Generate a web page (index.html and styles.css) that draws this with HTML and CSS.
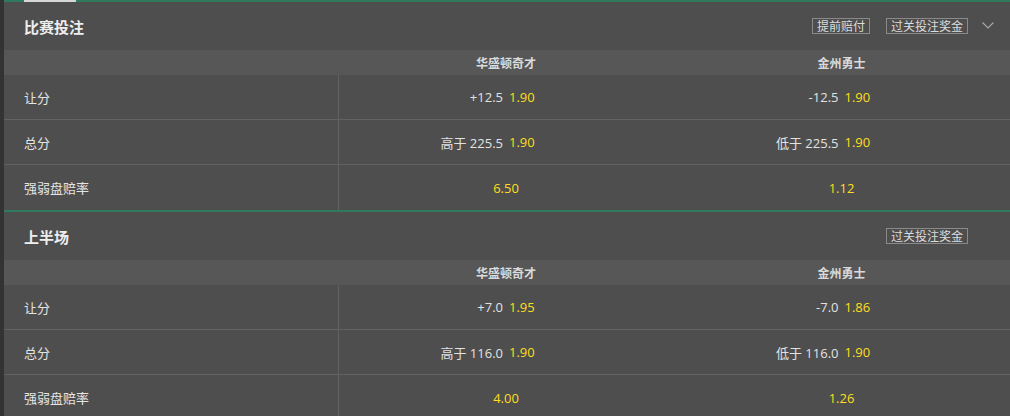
FILE: index.html
```html
<!DOCTYPE html>
<html lang="zh">
<head>
<meta charset="utf-8">
<link rel="stylesheet" href="styles.css">
</head>
<body>
<div class="page">
  <div class="rail"></div>
  <div class="main">
    <section class="market first">
      <div class="tab-mark"></div>
      <div class="m-head">
        <h2 class="m-title">比赛投注</h2>
        <div class="m-tools">
          <span class="tag tag-first">提前赔付</span>
          <span class="tag">过关投注奖金</span>
          <svg class="chev" width="12" height="7" viewBox="0 0 12 7"><path d="M0.5 0.5 L6 6 L11.5 0.5" fill="none" stroke="#a8a8a8" stroke-width="1.1"/></svg>
        </div>
      </div>
      <div class="grid">
        <div class="ch ch-blank"></div>
        <div class="ch">华盛顿奇才</div>
        <div class="ch">金州勇士</div>

        <div class="lbl">让分</div>
        <div class="odd"><span class="hc">+12.5</span><span class="pr">1.90</span></div>
        <div class="odd"><span class="hc">-12.5</span><span class="pr">1.90</span></div>

        <div class="lbl">总分</div>
        <div class="odd"><span class="hc">高于 225.5</span><span class="pr">1.90</span></div>
        <div class="odd"><span class="hc">低于 225.5</span><span class="pr">1.90</span></div>

        <div class="lbl last">强弱盘赔率</div>
        <div class="odd single last"><span class="pr">6.50</span></div>
        <div class="odd single last"><span class="pr">1.12</span></div>
      </div>
    </section>
    <section class="market">
      <div class="m-head">
        <h2 class="m-title">上半场</h2>
        <div class="m-tools">
          <span class="tag">过关投注奖金</span>
          <span class="chev-space"></span>
        </div>
      </div>
      <div class="grid">
        <div class="ch ch-blank"></div>
        <div class="ch">华盛顿奇才</div>
        <div class="ch">金州勇士</div>

        <div class="lbl">让分</div>
        <div class="odd"><span class="hc">+7.0</span><span class="pr">1.95</span></div>
        <div class="odd"><span class="hc">-7.0</span><span class="pr">1.86</span></div>

        <div class="lbl">总分</div>
        <div class="odd"><span class="hc">高于 116.0</span><span class="pr">1.90</span></div>
        <div class="odd"><span class="hc">低于 116.0</span><span class="pr">1.90</span></div>

        <div class="lbl last">强弱盘赔率</div>
        <div class="odd single last"><span class="pr">4.00</span></div>
        <div class="odd single last"><span class="pr">1.26</span></div>
      </div>
    </section>
  </div>
</div>
</body>
</html>
```
FILE: styles.css
```css
* { box-sizing: border-box; }
html, body { margin: 0; padding: 0; }
body {
  background: #4e4e4e;
  font-family: "Open Sans", "Noto Sans CJK SC", sans-serif;
  color: #e2e2e2;
  overflow: hidden;
}
.page { display: flex; height: 416px; }
.rail { width: 4px; background: #333333; flex: none; }
.main { flex: 1; }
.market {
  border-top: 2px solid #2f7a5c;
  position: relative;
}
.tab-mark {
  position: absolute;
  left: 20px;
  top: -2px;
  width: 52px;
  height: 2px;
  background: #d6d6d6;
}
.m-head {
  height: 48px;
  display: flex;
  align-items: center;
  justify-content: space-between;
  padding: 0 16px 0 20px;
}
.m-title {
  margin: 0;
  font-size: 15px;
  font-weight: bold;
  color: #eeeeee;
  font-family: "Noto Sans CJK SC", sans-serif;
}
.m-tools { display: flex; align-items: center; gap: 14px; }
.tag {
  font-family: "Noto Sans CJK SC", sans-serif;
  border: 1px solid #8a8a8a;
  font-size: 12px;
  line-height: 14px;
  padding: 0 4px;
  color: #dcdcdc;
}
.tag-first { margin-right: 2px; }
.chev { display: block; margin-top: -2px; }
.chev-space { width: 12px; }
.grid {
  display: grid;
  grid-template-columns: 335px 334px 1fr;
}
.ch {
  background: #575757;
  height: 25px;
  display: flex;
  align-items: center;
  justify-content: center;
  font-size: 12px;
  font-weight: bold;
  color: #dadada;
  font-family: "Noto Sans CJK SC", sans-serif;
}
.lbl, .odd {
  height: 45px;
  border-bottom: 1px solid #626262;
  font-size: 13px;
}
.lbl {
  display: flex;
  align-items: center;
  padding-left: 20px;
  border-right: 1px solid #626262;
  color: #e4e4e4;
}
.last { border-bottom: none; }
.odd { display: flex; align-items: center; }
.odd .hc {
  flex: 1;
  text-align: right;
  padding-right: 3px;
  color: #e2e2e2;
}
.odd .pr {
  flex: 1;
  padding-left: 3px;
  color: #ffdf1b;
}
.odd.single { justify-content: center; }
.odd.single .pr { flex: none; padding: 0; }
```
